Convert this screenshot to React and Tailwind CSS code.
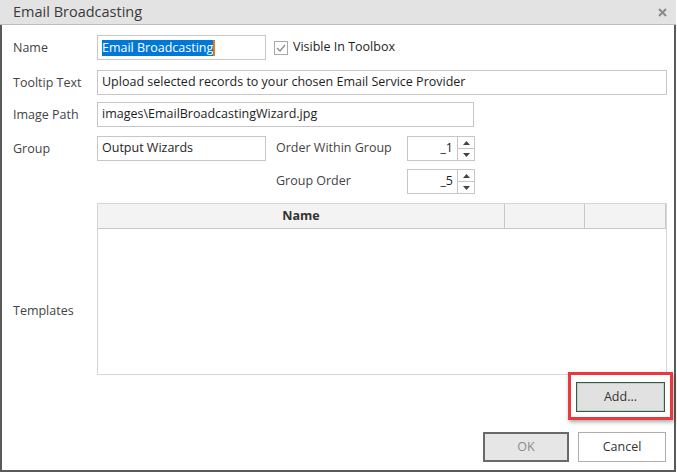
import React from 'react';

// Email Broadcasting tool dialog — label column on the left, fields on the right,
// templates grid with Add button and OK / Cancel at the bottom.

const font = { fontFamily: '"Open Sans", "Noto Sans", sans-serif' };

function Field({ className = '', children }) {
  return (
    <div
      className={`h-[25px] border border-[#c6c6c6] bg-white flex items-center px-[4px] text-[12.5px] text-[#1e1e1e] ${className}`}
    >
      {children}
    </div>
  );
}

function Label({ children }) {
  return (
    <div className="w-[84px] shrink-0 text-[12.5px] text-[#444] leading-[25px]">
      {children}
    </div>
  );
}

function Spinner({ value }) {
  return (
    <div className="w-[68px] h-[25px] border border-[#c6c6c6] bg-white flex">
      <div className="flex-1 flex items-center justify-end pr-[4px] text-[12.5px] text-[#1e1e1e]">
        {value}
      </div>
      <div className="w-[17px] border-l border-[#c6c6c6] flex flex-col">
        <div className="flex-1 flex items-center justify-center border-b border-[#c6c6c6]">
          <svg width="7" height="4" viewBox="0 0 7 4">
            <path d="M0 4 L3.5 0 L7 4 Z" fill="#444" />
          </svg>
        </div>
        <div className="flex-1 flex items-center justify-center">
          <svg width="7" height="4" viewBox="0 0 7 4">
            <path d="M0 0 L3.5 4 L7 0 Z" fill="#444" />
          </svg>
        </div>
      </div>
    </div>
  );
}

export default function App() {
  return (
    <div className="w-[677px] h-[472px] bg-white" style={font}>
      {/* title bar */}
      <div className="h-[25px] bg-[#e3e3e3] border-b border-[#bdbdbd] flex items-center justify-between pl-[13px] pr-[9px] w-[676px]">
        <span className="text-[14.5px] text-[#3a3a3a]">Email Broadcasting</span>
        <svg width="9" height="9" viewBox="0 0 9 9">
          <path d="M1 1 L8 8 M8 1 L1 8" stroke="#8a8a8a" strokeWidth="2" />
        </svg>
      </div>

      <div className="w-[676px] h-[447px] border-l-2 border-r-2 border-b-2 border-[#5a5a5a] pl-[11px] pt-[10px] relative">
        {/* Name */}
        <div className="flex items-center">
          <Label>Name</Label>
          <Field className="w-[169px]">
            <span className="bg-[#0078d7] text-white leading-[16px]">Email Broadcasting</span>
            <span className="w-[2px] h-[16px] bg-[#e07b1a]" />
          </Field>
          <div className="ml-[8px] w-[14px] h-[14px] border border-[#a8a8a8] flex items-center justify-center">
            <svg width="10" height="8" viewBox="0 0 10 8">
              <path d="M1 4 L4 7 L9 1" stroke="#8c8c8c" strokeWidth="1.3" fill="none" />
            </svg>
          </div>
          <span className="ml-[5px] text-[12.5px] text-[#1e1e1e]">Visible In Toolbox</span>
        </div>

        {/* Tooltip */}
        <div className="flex items-center mt-[10px]">
          <Label>Tooltip Text</Label>
          <Field className="w-[570px]">Upload selected records to your chosen Email Service Provider</Field>
        </div>

        {/* Image path */}
        <div className="flex items-center mt-[7px]">
          <Label>Image Path</Label>
          <Field className="w-[377px]">images\EmailBroadcastingWizard.jpg</Field>
        </div>

        {/* Group */}
        <div className="flex items-center mt-[9px]">
          <Label>Group</Label>
          <Field className="w-[169px]">Output Wizards</Field>
          <span className="ml-[10px] w-[131px] text-[12.5px] text-[#444]">Order Within Group</span>
          <Spinner value="_1" />
        </div>

        <div className="flex items-center mt-[8px]">
          <div className="w-[253px] shrink-0" />
          <span className="ml-[10px] w-[131px] text-[12.5px] text-[#444]">Group Order</span>
          <Spinner value="_5" />
        </div>

        {/* Templates */}
        <div className="flex mt-[9px]">
          <div className="w-[84px] shrink-0 pt-[99px] text-[12.5px] text-[#444]">Templates</div>
          <div className="flex flex-col">
            <div className="w-[570px] h-[172px] border border-[#d6d6d6] bg-white">
              <div className="flex h-[25px] bg-[#f3f3f3] border-b border-[#c8c8c8] text-[12.5px] font-bold text-[#333]">
                <div className="w-[407px] border-r border-[#c8c8c8] flex items-center justify-center">Name</div>
                <div className="w-[80px] border-r border-[#c8c8c8]" />
                <div className="w-[81px] border-r border-[#c8c8c8]" />
              </div>
            </div>
            <div className="flex justify-end mt-[7px] pr-[2px]">
              <div className="relative">
                <div className="absolute left-[-8px] top-[-10px] w-[105px] h-[48px] border-[3px] border-[#e8393f] shadow-[1px_2px_4px_rgba(0,0,0,0.35)]" />
                <button className="relative w-[89px] h-[30px] bg-[#e1e1e1] border border-[#4d4d4d] shadow-[inset_0_0_0_1px_#a9dcc0] text-[12.5px] text-[#333]">
                  Add...
                </button>
              </div>
            </div>
          </div>
        </div>

        {/* bottom buttons */}
        <div className="flex justify-end gap-[9px] mt-[20px] pr-[8px]">
          <button className="w-[86px] h-[30px] bg-[#e6e6e6] border-2 border-[#6a6a6a] text-[12.5px] text-[#8a8a8a]">OK</button>
          <button className="w-[88px] h-[30px] bg-white border border-[#adadad] text-[12.5px] text-[#333]">Cancel</button>
        </div>
      </div>
    </div>
  );
}
